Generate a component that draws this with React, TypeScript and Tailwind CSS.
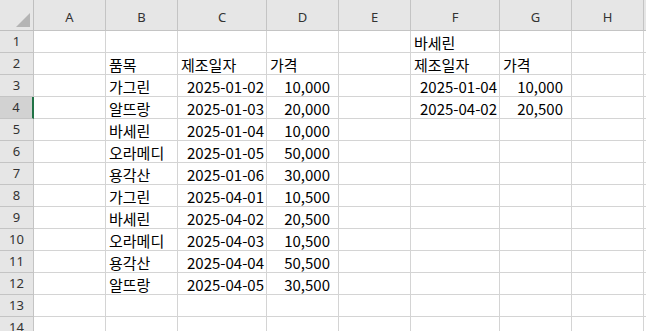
import React from "react";

type Cell = { t: string; a?: "l" | "r"; pr?: string };

const cols = ["A", "B", "C", "D", "E", "F", "G", "H"];

const names = ["가그린", "알뜨랑", "바세린", "오라메디", "용각산", "가그린", "바세린", "오라메디", "용각산", "알뜨랑"];
const dates = ["2025-01-02", "2025-01-03", "2025-01-04", "2025-01-05", "2025-01-06", "2025-04-01", "2025-04-02", "2025-04-03", "2025-04-04", "2025-04-05"];
const prices = ["10,000", "20,000", "10,000", "50,000", "30,000", "10,500", "20,500", "10,500", "50,500", "30,500"];

function buildData(): Record<string, Cell> {
  const d: Record<string, Cell> = {};
  d["F1"] = { t: "바세린" };
  d["B2"] = { t: "품목" };
  d["C2"] = { t: "제조일자" };
  d["D2"] = { t: "가격" };
  d["F2"] = { t: "제조일자" };
  d["G2"] = { t: "가격" };
  for (let i = 0; i < 10; i++) {
    const r = i + 3;
    d["B" + r] = { t: names[i] };
    d["C" + r] = { t: dates[i], a: "r" };
    d["D" + r] = { t: prices[i], a: "r", pr: "pr-[8px]" };
  }
  d["F3"] = { t: "2025-01-04", a: "r" };
  d["G3"] = { t: "10,000", a: "r", pr: "pr-[8px]" };
  d["F4"] = { t: "2025-04-02", a: "r" };
  d["G4"] = { t: "20,500", a: "r", pr: "pr-[8px]" };
  return d;
}

const data = buildData();

export default function App() {
  const rows = Array.from({ length: 14 }, (_, i) => i + 1);
  return (
    <div
      className="w-[646px] h-[331px] overflow-hidden bg-white text-black"
      style={{ fontFamily: '"Noto Sans CJK KR", "Noto Sans", sans-serif' }}
    >
      <div className="grid grid-cols-[34px_72px_72px_89px_72px_72px_89px_72px_72px_1fr] grid-rows-[31px_repeat(14,22px)]">
        {/* corner */}
        <div className="relative bg-[#e6e6e6] border-r border-b border-[#bfbfbf]">
          <svg className="absolute left-0 top-0" width="33" height="30" viewBox="0 0 33 30">
            <polygon points="16,27 30,27 30,13" fill="#b4b4b4" />
          </svg>
        </div>
        {cols.map((c) => (
          <div
            key={c}
            className="flex items-center justify-center pt-[4px] bg-[#e6e6e6] border-r border-b border-[#c4c4c4] text-[13px] leading-none text-[#333]"
            style={{ fontFamily: '"Noto Sans", sans-serif' }}
          >
            {c}
          </div>
        ))}
        <div className="bg-[#e6e6e6] border-b border-[#c4c4c4]" />
        {rows.map((r) => (
          <React.Fragment key={r}>
            <div
              className={
                "flex items-center justify-center text-[13px] leading-none text-[#333] border-b " +
                (r === 4
                  ? "bg-[#d2d2d2] border-r-2 border-r-[#217346] border-b-[#c4c4c4]"
                  : "bg-[#e6e6e6] border-r border-[#c4c4c4]")
              }
              style={{ fontFamily: '"Noto Sans", sans-serif' }}
            >
              {r}
            </div>
            {cols.map((c) => {
              const cell = data[c + r];
              return (
                <div
                  key={c}
                  className={
                    "flex items-center overflow-visible whitespace-nowrap border-r border-b border-[#d4d4d4] text-[15px] leading-none " +
                    (cell?.a === "r" ? "justify-end " + (cell.pr ?? "pr-[2px]") : "justify-start pl-[3px]")
                  }
                >
                  {cell ? <span className="pt-[1px]">{cell.t}</span> : null}
                </div>
              );
            })}
            <div className="border-b border-[#d4d4d4]" />
          </React.Fragment>
        ))}
      </div>
    </div>
  );
}
